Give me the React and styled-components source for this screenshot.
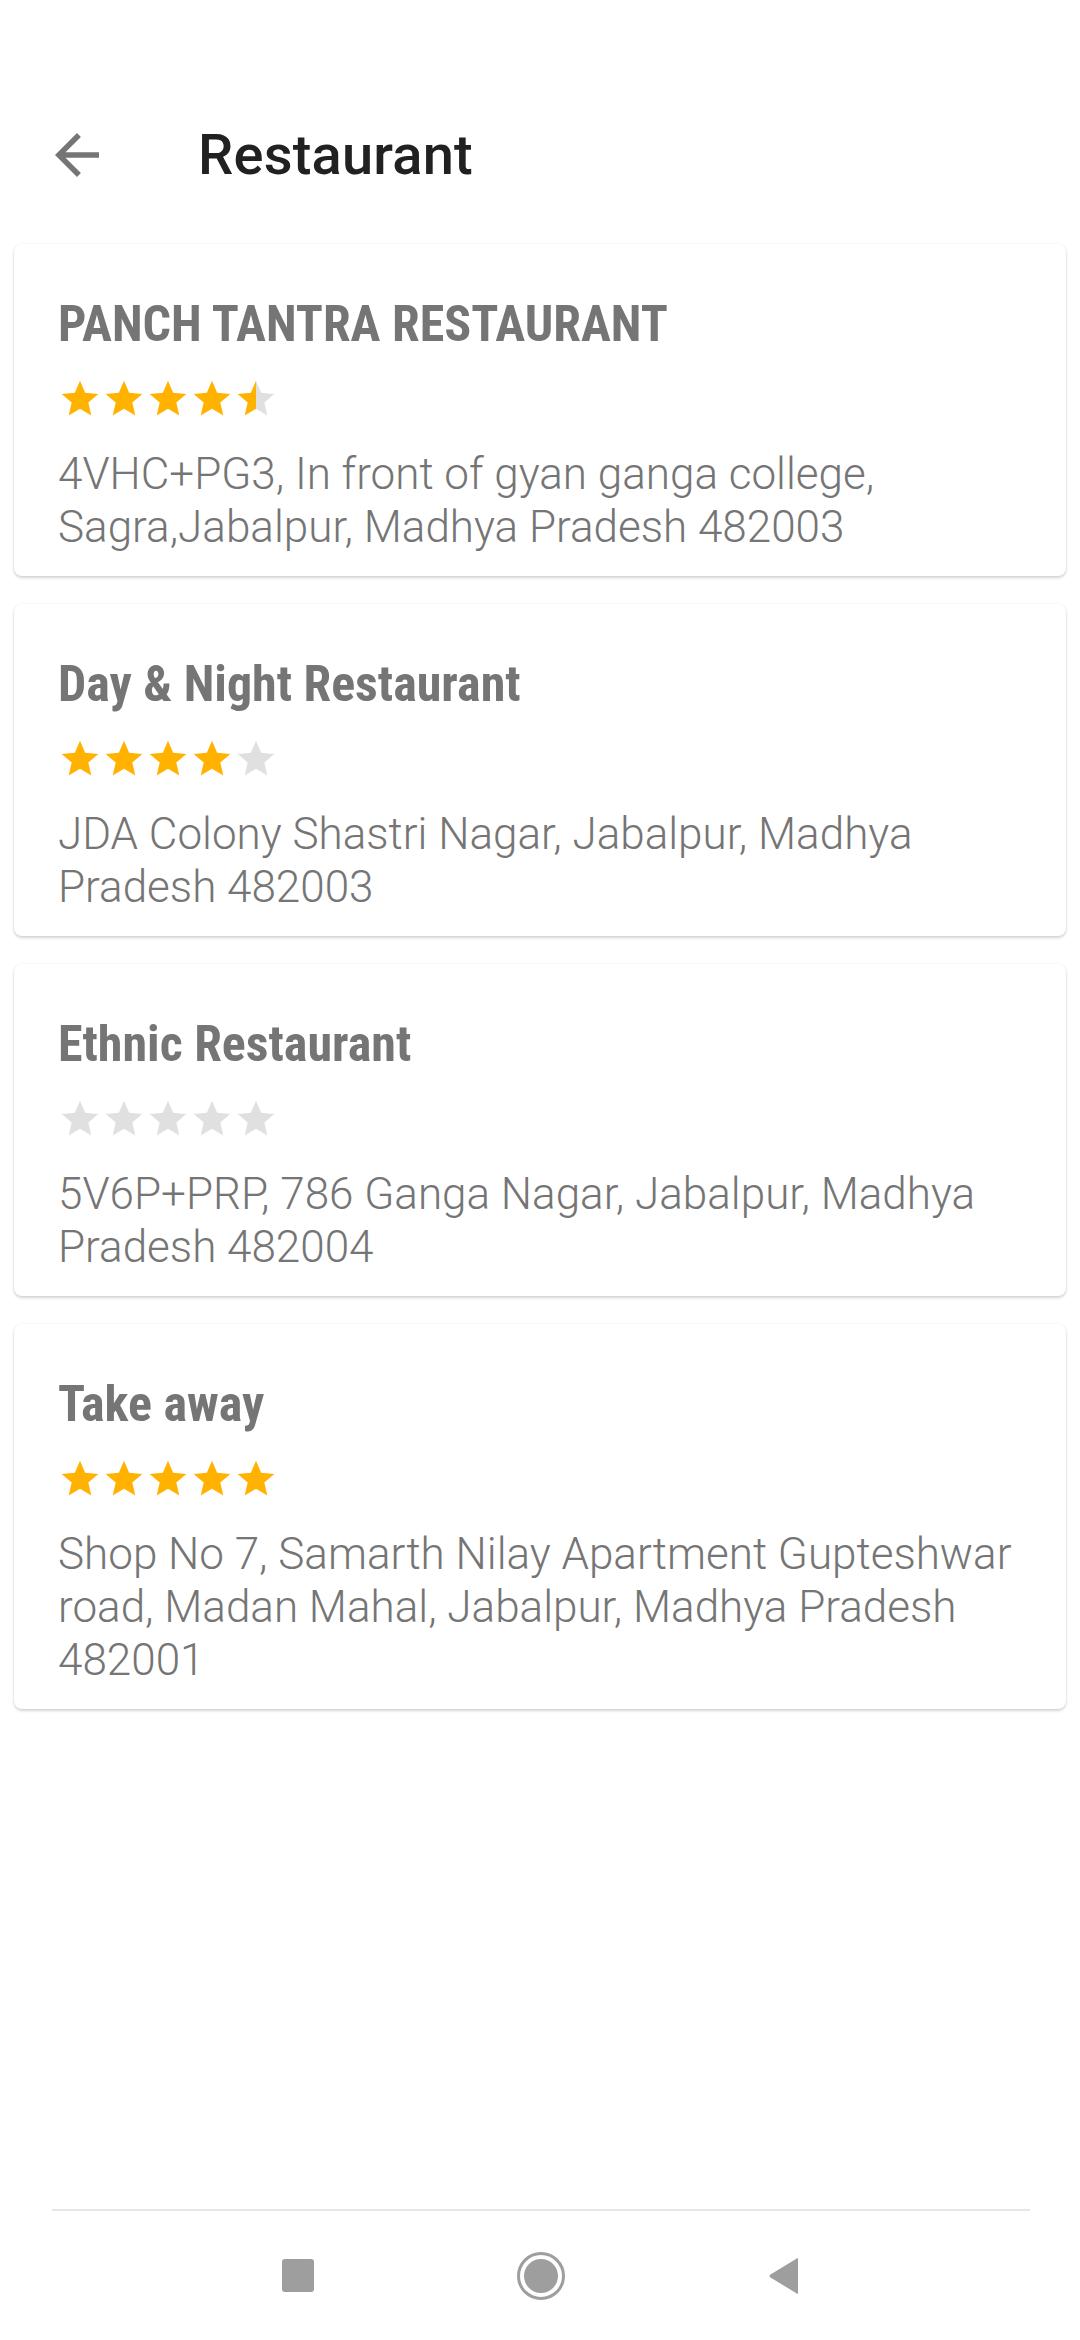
import React from "react";
import styled, { createGlobalStyle } from "styled-components";

const Global = createGlobalStyle`
  html, body { margin: 0; padding: 0; background: #ffffff; }
  body { font-family: Roboto, "Noto Sans", sans-serif; -webkit-font-smoothing: antialiased; }
  * { box-sizing: border-box; }
`;

const Screen = styled.div`
  width: 1080px;
  min-height: 2340px;
  display: flex;
  flex-direction: column;
  background: #ffffff;
`;

const StatusBar = styled.div`
  height: 81px;
`;

const Toolbar = styled.header`
  height: 147px;
  display: flex;
  align-items: center;
  padding-left: 44px;
`;

const BackButton = styled.button`
  border: 0;
  background: transparent;
  padding: 0;
  width: 66px;
  height: 66px;
  display: flex;
  align-items: center;
  justify-content: center;
  color: #757575;
  margin-right: 88px;
`;

const Title = styled.h1`
  margin: 0;
  font-family: Roboto, sans-serif;
  font-weight: 500;
  font-size: 56px;
  color: #212121;
  letter-spacing: 0.2px;
`;

const List = styled.main`
  flex: 1;
  display: flex;
  flex-direction: column;
  gap: 28px;
  padding: 16px 14px 0;
`;

const Card = styled.article`
  background: #ffffff;
  border-radius: 8px;
  box-shadow: 0 2px 3px rgba(0, 0, 0, 0.16), 0 0 2px rgba(0, 0, 0, 0.08);
  padding: 50px 20px 22px 44px;
  display: flex;
  flex-direction: column;
`;

const Name = styled.h2`
  margin: 0;
  font-family: "Roboto Condensed", "Liberation Sans Narrow", Roboto, sans-serif;
  font-stretch: condensed;
  font-weight: 700;
  font-size: 50px;
  line-height: 60px;
  color: #757575;
`;

const Stars = styled.div`
  display: flex;
  margin-top: 23px;
  height: 44px;
`;

const Address = styled.p`
  margin: 27px 0 0;
  font-family: Roboto, sans-serif;
  font-weight: 300;
  font-size: 44px;
  line-height: 53px;
  color: #757575;
`;

const NavBar = styled.nav`
  height: 131px;
  margin: 0 50px 0 52px;
  border-top: 2px solid #e6e6e6;
  display: flex;
  align-items: center;
  justify-content: center;
  gap: 163px;
`;

const NavCell = styled.div`
  width: 80px;
  height: 60px;
  display: flex;
  align-items: center;
  justify-content: center;
`;

const SquareKey = styled.div`
  width: 32px;
  height: 33px;
  border-radius: 3px;
  background: #9e9e9e;
`;

const HomeKey = styled.div`
  width: 48px;
  height: 48px;
  border-radius: 50%;
  border: 3px solid #9e9e9e;
  display: flex;
  align-items: center;
  justify-content: center;
  &::after {
    content: "";
    width: 34px;
    height: 34px;
    border-radius: 50%;
    background: #9e9e9e;
  }
`;

const STAR = "M12 17.27L18.18 21l-1.64-7.03L22 9.24l-7.19-.61L12 2 9.19 8.63 2 9.24l5.46 4.73L5.82 21z";

function Star({ fill, id }) {
  return (
    <svg width="44" height="44" viewBox="0 0 24 24">
      <defs>
        <linearGradient id={id} x1="2" x2="22" y1="0" y2="0" gradientUnits="userSpaceOnUse">
          <stop offset={fill} stopColor="#FFB300" />
          <stop offset={fill} stopColor="#E0E0E0" />
        </linearGradient>
      </defs>
      <path d={STAR} fill={`url(#${id})`} />
    </svg>
  );
}

function Rating({ value, uid }) {
  return (
    <Stars>
      {[0, 1, 2, 3, 4].map((i) => {
        const f = Math.max(0, Math.min(1, value - i));
        return <Star key={i} fill={f} id={`${uid}-s${i}`} />;
      })}
    </Stars>
  );
}

const restaurants = [
  {
    name: "PANCH TANTRA RESTAURANT",
    rating: 4.5,
    address: "4VHC+PG3, In front of gyan ganga college, Sagra,Jabalpur, Madhya Pradesh 482003",
  },
  {
    name: "Day & Night Restaurant",
    rating: 4,
    address: "JDA Colony Shastri Nagar, Jabalpur, Madhya Pradesh 482003",
  },
  {
    name: "Ethnic Restaurant",
    rating: 0,
    address: "5V6P+PRP, 786 Ganga Nagar, Jabalpur, Madhya Pradesh 482004",
  },
  {
    name: "Take away",
    rating: 5,
    address: "Shop No 7, Samarth Nilay Apartment Gupteshwar road, Madan Mahal, Jabalpur, Madhya Pradesh 482001",
  },
];

export default function App() {
  return (
    <Screen>
      <Global />
      <StatusBar />
      <Toolbar>
        <BackButton aria-label="Back">
          <svg width="66" height="66" viewBox="0 0 24 24">
            <path fill="currentColor" d="M20 11H7.83l5.59-5.59L12 4l-8 8 8 8 1.41-1.41L7.83 13H20v-2z" />
          </svg>
        </BackButton>
        <Title>Restaurant</Title>
      </Toolbar>
      <List>
        {restaurants.map((r, i) => (
          <Card key={i}>
            <Name>{r.name}</Name>
            <Rating value={r.rating} uid={`r${i}`} />
            <Address>{r.address}</Address>
          </Card>
        ))}
      </List>
      <NavBar>
        <NavCell>
          <SquareKey />
        </NavCell>
        <NavCell>
          <HomeKey />
        </NavCell>
        <NavCell>
          <svg width="34" height="40" viewBox="0 0 34 40">
            <path
              d="M31 3.5 L31 36.5 Q31 39 29 37 L3.5 21.5 Q1.5 20 3.5 18.5 L29 3 Q31 1 31 3.5 Z"
              fill="#9e9e9e"
            />
          </svg>
        </NavCell>
      </NavBar>
    </Screen>
  );
}
